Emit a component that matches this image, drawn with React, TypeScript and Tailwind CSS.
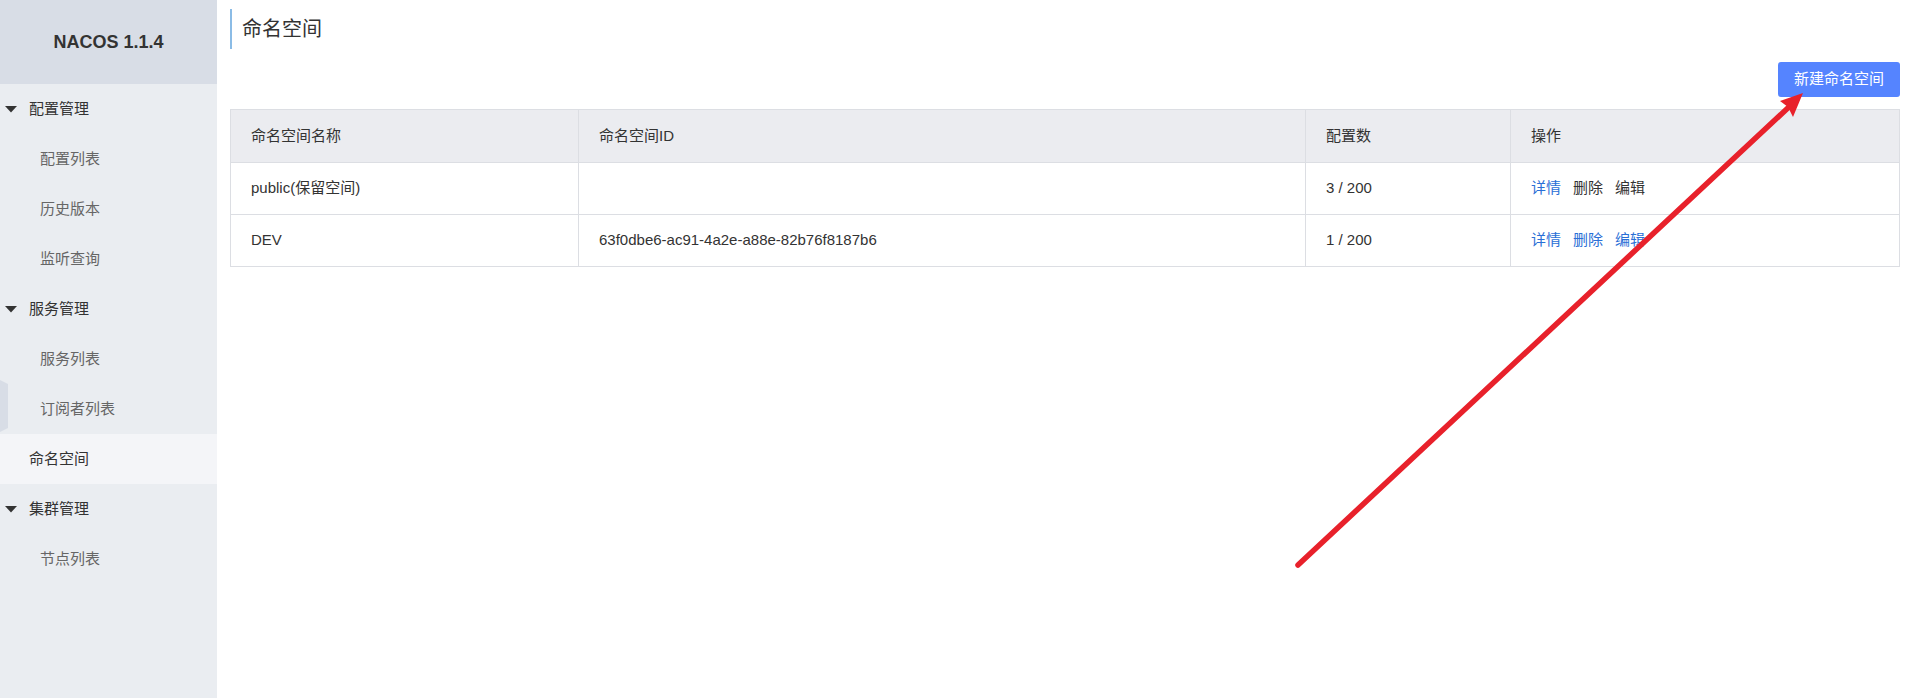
import React from "react";

const font = { fontFamily: '"Liberation Sans", "Noto Sans CJK SC", sans-serif' };

function Caret() {
  return (
    <svg width="12" height="7" viewBox="0 0 12 7" className="shrink-0">
      <path d="M0 0 H12 L6 6.5 Z" fill="#333" />
    </svg>
  );
}

function Group({ label }: { label: string }) {
  return (
    <div className="h-[50px] flex items-center pl-[5px] gap-[12px] text-[15px] text-[#333]">
      <Caret />
      <span>{label}</span>
    </div>
  );
}

function Sub({ label }: { label: string }) {
  return (
    <div className="h-[50px] flex items-center pl-[40px] text-[15px] text-[#666]">
      {label}
    </div>
  );
}

const rows = [
  { name: "public(保留空间)", id: "", count: "3 / 200", reserved: true },
  { name: "DEV", id: "63f0dbe6-ac91-4a2e-a88e-82b76f8187b6", count: "1 / 200", reserved: false },
];

export default function App() {
  return (
    <div className="relative flex h-[698px] w-full bg-white overflow-hidden" style={font}>
      <aside className="relative w-[217px] shrink-0 bg-[#eaedf1] flex flex-col">
        <div className="h-[84px] bg-[#d8dde6] flex items-center justify-center text-[18px] font-bold text-[#333]">
          NACOS 1.1.4
        </div>
        <Group label="配置管理" />
        <Sub label="配置列表" />
        <Sub label="历史版本" />
        <Sub label="监听查询" />
        <Group label="服务管理" />
        <Sub label="服务列表" />
        <Sub label="订阅者列表" />
        <div className="h-[50px] flex items-center pl-[29px] text-[15px] text-[#333] bg-[#f4f5f8]">
          命名空间
        </div>
        <Group label="集群管理" />
        <Sub label="节点列表" />
        <svg
          width="9"
          height="52"
          viewBox="0 0 9 52"
          className="absolute left-0 top-[380px]"
        >
          <path d="M0 0 L8 4 V48 L0 52 Z" fill="#d8dde6" />
        </svg>
      </aside>

      <main className="flex-1 pl-[13px] pr-[12px] flex flex-col">
        <div className="mt-[9px] h-[40px] border-l-2 border-[#8bbce6] pl-[10px] flex items-center text-[20px] text-[#333]">
          命名空间
        </div>
        <div className="mt-[13px] flex justify-end">
          <button className="h-[35px] w-[122px] rounded-[3px] bg-[#5584ff] text-white text-[15px] flex items-center justify-center">
            新建命名空间
          </button>
        </div>
        <table className="mt-[12px] w-full table-fixed border-collapse border border-[#dcdee3] text-[15px] text-[#333]">
          <colgroup>
            <col className="w-[348px]" />
            <col className="w-[727px]" />
            <col className="w-[205px]" />
            <col />
          </colgroup>
          <thead>
            <tr className="h-[53px] bg-[#ebecf0]">
              <th className="border border-[#dcdee3] pl-[20px] text-left font-normal">命名空间名称</th>
              <th className="border border-[#dcdee3] pl-[20px] text-left font-normal">命名空间ID</th>
              <th className="border border-[#dcdee3] pl-[20px] text-left font-normal">配置数</th>
              <th className="border border-[#dcdee3] pl-[20px] text-left font-normal">操作</th>
            </tr>
          </thead>
          <tbody>
            {rows.map((r) => (
              <tr key={r.name} className="h-[52px]">
                <td className="border border-[#dcdee3] pl-[20px]">{r.name}</td>
                <td className="border border-[#dcdee3] pl-[20px]">{r.id}</td>
                <td className="border border-[#dcdee3] pl-[20px]">{r.count}</td>
                <td className="border border-[#dcdee3] pl-[20px]">
                  <div className="flex gap-[12px]">
                    <span className="text-[#2a6fd6]">详情</span>
                    <span className={r.reserved ? "text-[#333]" : "text-[#2a6fd6]"}>删除</span>
                    <span className={r.reserved ? "text-[#333]" : "text-[#2a6fd6]"}>编辑</span>
                  </div>
                </td>
              </tr>
            ))}
          </tbody>
        </table>
      </main>

      <svg
        className="absolute left-0 top-0 pointer-events-none"
        width="1912"
        height="698"
        viewBox="0 0 1912 698"
      >
        <line x1="1298" y1="565" x2="1790" y2="106" stroke="#e8212b" strokeWidth="5.5" strokeLinecap="round" />
        <path d="M1803 93 L1780 101 L1788 107 L1793 117 Z" fill="#e8212b" />
      </svg>
    </div>
  );
}
